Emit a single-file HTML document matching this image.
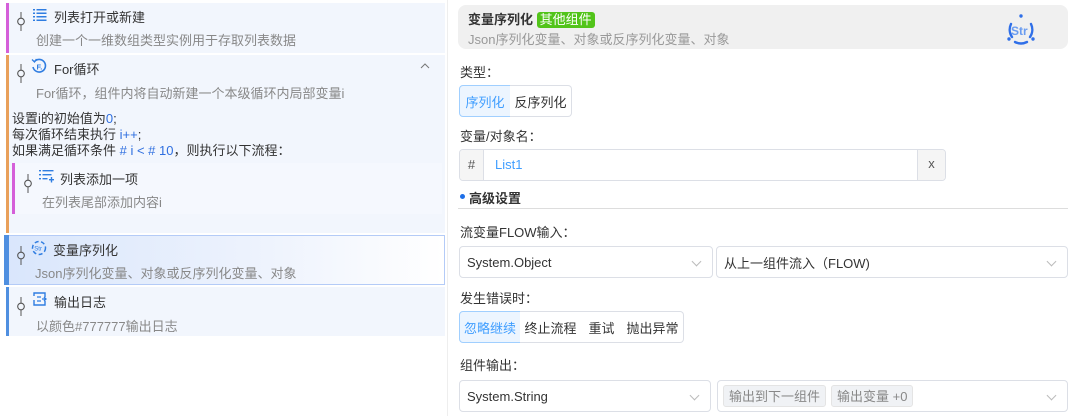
<!DOCTYPE html>
<html><head><meta charset="utf-8"><style>
*{box-sizing:border-box;margin:0;padding:0}
body{width:1072px;height:416px;background:#fff;font-family:"Liberation Sans","Noto Sans CJK SC",sans-serif;font-size:13px;color:#333;position:relative;overflow:hidden}
.a{position:absolute}
.item{position:absolute;background:#f2f6fd}
.bar{position:absolute;left:0;top:0;bottom:0;width:3px}
.t{position:absolute;font-size:13px;color:#333;white-space:nowrap}
.d{position:absolute;font-size:13px;color:#888;white-space:nowrap}
.btn{position:absolute;height:32px;border:1px solid #dcdfe6;background:#fff;display:flex;align-items:center;justify-content:center;font-size:13px;color:#333}
.sel{background:#ecf5ff;border-color:#a0cfff;color:#409eff}
.lbl{position:absolute;left:460px;font-size:13px;color:#333}
.select{position:absolute;height:32px;border:1px solid #dcdfe6;border-radius:4px;background:#fff;padding-left:7px;display:flex;align-items:center;font-size:13px}
.chev{position:absolute;right:12px;top:11px;width:7px;height:7px;border-right:1px solid #bbb;border-bottom:1px solid #bbb;transform:rotate(45deg)}
.tag{display:inline-block;background:#f0f2f5;border:1px solid #e4e4e4;color:#888;font-size:13px;padding:0 5px;height:22px;line-height:21px;border-radius:3px;margin-right:5px}
</style></head><body>
<svg width="0" height="0" style="position:absolute"><defs><g id="pin"><line x1="4" y1="0" x2="4" y2="6" stroke="#555" stroke-width="1"/><circle cx="4" cy="9.5" r="3.3" fill="none" stroke="#555" stroke-width="1.1"/><line x1="4" y1="13" x2="4" y2="19" stroke="#555" stroke-width="1"/></g></defs></svg>

<div class="item" style="left:6px;top:3px;width:439px;height:50px"><div class="bar" style="background:#d55fd9"></div></div>
<svg class="a" style="left:17px;top:12px" width="8" height="20"><use href="#pin"/></svg>
<svg class="a" style="left:33px;top:8px" width="14" height="14"><g fill="#2f7de1"><rect x="0" y="1" width="2" height="1.5"/><rect x="3.5" y="1" width="10" height="1.5"/><rect x="0" y="4.5" width="2" height="1.5"/><rect x="3.5" y="4.5" width="10" height="1.5"/><rect x="0" y="8" width="2" height="1.5"/><rect x="3.5" y="8" width="10" height="1.5"/><rect x="0" y="11.5" width="2" height="1.5"/><rect x="3.5" y="11.5" width="10" height="1.5"/></g></svg>
<div class="t" style="left:54px;top:7px">列表打开或新建</div>
<div class="d" style="left:36px;top:30px">创建一个一维数组类型实例用于存取列表数据</div>

<div class="item" style="left:6px;top:55px;width:439px;height:178px"><div class="bar" style="background:#e9a05a"></div></div>
<svg class="a" style="left:17px;top:64px" width="8" height="20"><use href="#pin"/></svg>
<svg class="a" style="left:31px;top:58px" width="16" height="16"><path d="M3.5 3.5A6.3 6.3 0 1 1 2 9" fill="none" stroke="#2f7de1" stroke-width="1.6"/><path d="M1 1.5L3.5 4L5.5 1" fill="none" stroke="#2f7de1" stroke-width="1.3"/><text x="5.5" y="11.5" font-size="7.5" font-weight="bold" fill="#2f7de1" font-family="Liberation Sans">F.</text></svg>
<div class="t" style="left:54px;top:59px">For循环</div>
<svg class="a" style="left:420px;top:62px" width="10" height="7"><path d="M1 6L5 2L9 6" fill="none" stroke="#777" stroke-width="1"/></svg>
<div class="d" style="left:36px;top:83px">For循环，组件内将自动新建一个本级循环内局部变量i</div>
<div class="t" style="left:12px;top:111px;line-height:16px">设置i的初始值为<span style="color:#2f6fe0">0</span>;<br>每次循环结束执行 <span style="color:#2f6fe0">i++</span>;<br>如果满足循环条件 <span style="color:#2f6fe0"># i &lt; # 10</span>，则执行以下流程：</div>
<div class="item" style="left:12px;top:163px;width:430px;height:51px;background:#f5f8fe"><div class="bar" style="background:#d55fd9"></div></div>
<svg class="a" style="left:24px;top:174px" width="8" height="20"><use href="#pin"/></svg>
<svg class="a" style="left:39px;top:169px" width="15" height="14"><g fill="#2f7de1"><rect x="0" y="1" width="2" height="1.4"/><rect x="3.5" y="1" width="11" height="1.4"/><rect x="0" y="5" width="2" height="1.4"/><rect x="3.5" y="5" width="9" height="1.4"/><rect x="0" y="9" width="2" height="1.4"/><rect x="3.5" y="9" width="5" height="1.4"/><rect x="10" y="10" width="5" height="1.4"/><rect x="11.8" y="8" width="1.4" height="5.5"/></g></svg>
<div class="t" style="left:60px;top:169px">列表添加一项</div>
<div class="d" style="left:42px;top:192px">在列表尾部添加内容i</div>

<div class="a" style="left:4px;top:235px;width:441px;height:50px;border:1px solid #b4cbf7;background:linear-gradient(90deg,#d9e6fc,#eef3fd 60%,#fff)"><div class="bar" style="left:-1px;top:-1px;bottom:-1px;width:5px;background:#4f8fe0"></div></div>
<svg class="a" style="left:17px;top:246px" width="8" height="20"><use href="#pin"/></svg>
<svg class="a" style="left:31px;top:240px" width="16" height="16"><circle cx="8" cy="8" r="6.5" fill="none" stroke="#2f7de1" stroke-width="1.5" stroke-dasharray="4 2.5"/><text x="3.3" y="10.5" font-size="6" fill="#2f7de1" font-family="Liberation Sans">Str</text></svg>
<div class="t" style="left:53px;top:240px">变量序列化</div>
<div class="d" style="left:35px;top:263px">Json序列化变量、对象或反序列化变量、对象</div>

<div class="item" style="left:6px;top:287px;width:439px;height:49px"><div class="bar" style="background:#4f8fe0"></div></div>
<svg class="a" style="left:17px;top:297px" width="8" height="20"><use href="#pin"/></svg>
<svg class="a" style="left:33px;top:292px" width="14" height="14"><path d="M1 4V1H12V5M1 8V13H12V9" fill="none" stroke="#2f7de1" stroke-width="1.4"/><path d="M4 5H8M4 9H8M9 7H13M11 5L13 7L11 9" fill="none" stroke="#2f7de1" stroke-width="1.3"/></svg>
<div class="t" style="left:54px;top:292px">输出日志</div>
<div class="d" style="left:36px;top:316px">以颜色#777777输出日志</div>

<div class="a" style="left:447px;top:0;width:1px;height:416px;background:#eee"></div>

<div class="a" style="left:458px;top:5px;width:610px;height:44px;background:#f0f0f0;border-radius:8px"></div>
<div class="t" style="left:468px;top:9px;font-weight:bold">变量序列化 <span style="display:inline-block;background:#52c41a;color:#fff;font-weight:normal;padding:0 3px;border-radius:3px;line-height:16px">其他组件</span></div>
<div class="d" style="left:468px;top:29px;color:#999">Json序列化变量、对象或反序列化变量、对象</div>
<svg class="a" style="left:1005px;top:13px" width="32" height="34"><path d="M6 11A13 13 0 0 0 7 24M26 11A13 13 0 0 1 25 24M10 29Q16 32 22 29" fill="none" stroke="#2f6fe8" stroke-width="2.4" stroke-linecap="round"/><circle cx="16" cy="3" r="1.7" fill="#2f6fe8"/><circle cx="4" cy="26" r="1.7" fill="#2f6fe8"/><circle cx="28" cy="26" r="1.7" fill="#2f6fe8"/><text x="6" y="22" font-size="12" font-weight="bold" fill="#6a9cf0" font-family="Liberation Sans">Str</text></svg>

<div class="lbl" style="top:62px">类型：</div>
<div class="btn sel" style="left:459px;top:85px;width:52px;border-radius:4px 0 0 4px">序列化</div>
<div class="btn" style="left:510px;top:85px;width:62px;border-radius:0 4px 4px 0;border-left:none">反序列化</div>

<div class="lbl" style="top:126px">变量/对象名：</div>
<div class="a" style="left:459px;top:149px;width:487px;height:32px;border:1px solid #dcdfe6;border-radius:4px;background:#fff;overflow:hidden">
<div class="a" style="left:0;top:0;width:24px;height:30px;background:#f5f5f5;border-right:1px solid #dcdfe6;text-align:center;line-height:30px;color:#555">#</div>
<div class="a" style="left:35px;top:0;line-height:30px;color:#409eff">List1</div>
<div class="a" style="right:0;top:0;width:28px;height:30px;background:#f5f5f5;border-left:1px solid #dcdfe6;text-align:center;line-height:28px;color:#555">x</div>
</div>

<div class="a" style="left:460px;top:194px;width:5px;height:5px;border-radius:50%;background:#1e6fe8"></div>
<div class="t" style="left:469px;top:188px;font-weight:bold">高级设置</div>
<div class="a" style="left:458px;top:208px;width:610px;height:1px;background:#ddd"></div>

<div class="lbl" style="top:222px">流变量FLOW输入：</div>
<div class="select" style="left:459px;top:246px;width:254px">System.Object<div class="chev"></div></div>
<div class="select" style="left:716px;top:246px;width:352px">从上一组件流入（FLOW)<div class="chev"></div></div>

<div class="lbl" style="top:288px">发生错误时：</div>
<div class="btn sel" style="left:459px;top:311px;width:62px;border-radius:4px 0 0 4px">忽略继续</div>
<div class="btn" style="left:520px;top:311px;width:62px;border-left:none">终止流程</div>
<div class="btn" style="left:581px;top:311px;width:42px;border-left:none">重试</div>
<div class="btn" style="left:622px;top:311px;width:62px;border-left:none;border-radius:0 4px 4px 0">抛出异常</div>

<div class="lbl" style="top:355px">组件输出：</div>
<div class="select" style="left:459px;top:380px;width:252px">System.String<div class="chev"></div></div>
<div class="select" style="left:717px;top:380px;width:351px;padding-left:5px"><span class="tag">输出到下一组件</span><span class="tag">输出变量 +0</span><div class="chev"></div></div>
</body></html>
